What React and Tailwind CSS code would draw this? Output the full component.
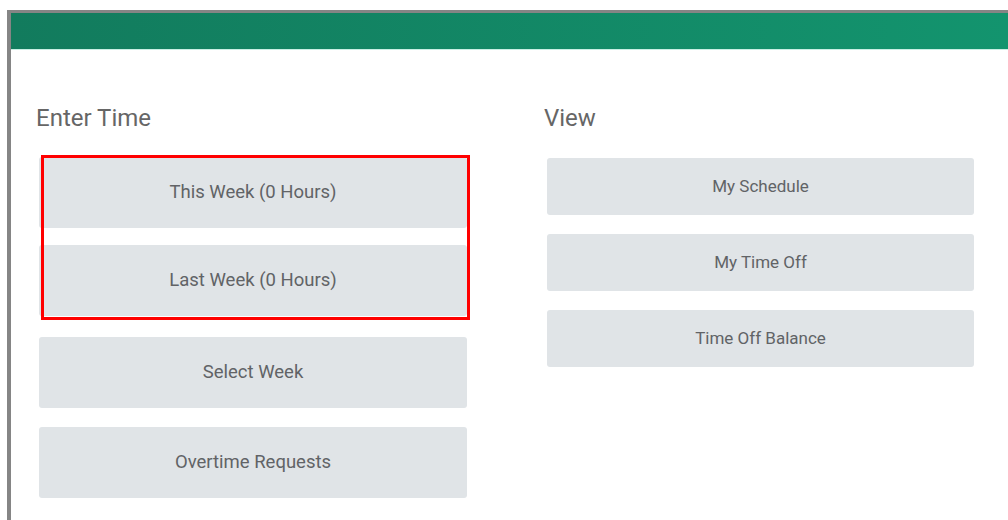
import React from 'react';

const enterTime = [
  { label: 'This Week (0 Hours)' },
  { label: 'Last Week (0 Hours)' },
];

const moreTime = ['Select Week', 'Overtime Requests'];

const viewLinks = ['My Schedule', 'My Time Off', 'Time Off Balance'];

function TimeButton({ children, className = '' }) {
  return (
    <button
      className={`w-full flex items-center justify-center bg-[#e0e4e7] rounded-[3px] text-[#616366] ${className}`}
    >
      {children}
    </button>
  );
}

export default function App() {
  return (
    <div className="w-[1008px] h-[520px] overflow-hidden bg-white pt-[10px] pl-[7px] font-['Roboto',sans-serif]">
      <div className="h-full border-l-4 border-t-[3px] border-[#858585] bg-white">
        {/* brand bar */}
        <div className="h-[37px] bg-gradient-to-r from-[#127b5d] to-[#13946e] border-b border-[#c9efe4]" />

        <div className="flex pl-[25px] pt-[52px]">
          {/* Enter Time column */}
          <section className="w-[508px]">
            <h2 className="text-[24px] leading-[32px] text-[#666] font-normal">Enter Time</h2>
            <div className="mt-[23px] ml-[3px] w-[428px]">
              <div className="relative flex flex-col gap-[17px]">
                {enterTime.map((item) => (
                  <TimeButton key={item.label} className="h-[71px] text-[18.5px]">
                    {item.label}
                  </TimeButton>
                ))}
                <div className="absolute left-[2px] -right-[3px] -top-[2px] -bottom-[4px] border-[3px] border-[#ff0000] pointer-events-none" />
              </div>
              <div className="flex flex-col gap-[19px] mt-[21px]">
                {moreTime.map((label) => (
                  <TimeButton key={label} className="h-[71px] text-[18.5px]">
                    {label}
                  </TimeButton>
                ))}
              </div>
            </div>
          </section>

          {/* View column */}
          <section className="w-[431px]">
            <h2 className="text-[24px] leading-[32px] text-[#666] font-normal">View</h2>
            <div className="mt-[24px] ml-[3px] w-[427px] flex flex-col gap-[19px]">
              {viewLinks.map((label) => (
                <TimeButton key={label} className="h-[57px] text-[17px]">
                  {label}
                </TimeButton>
              ))}
            </div>
          </section>
        </div>
      </div>
    </div>
  );
}
